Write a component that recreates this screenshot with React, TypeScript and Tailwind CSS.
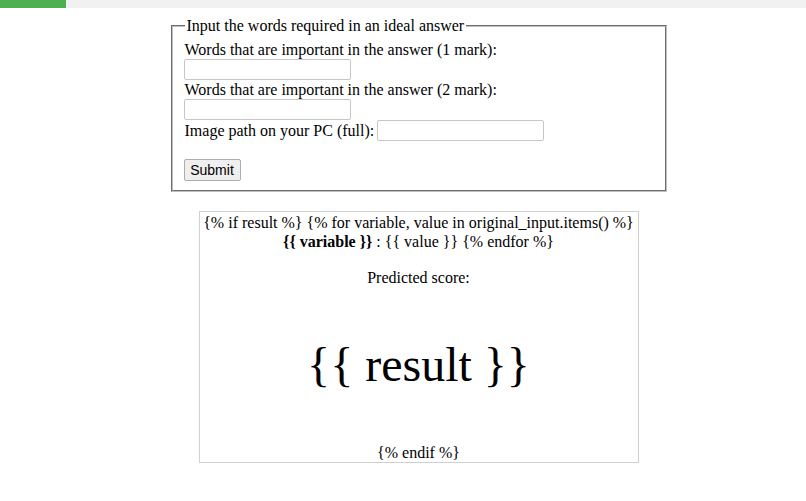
import React from "react";

const serif = "font-['Liberation_Serif','Times_New_Roman',serif]";

export default function App() {
  return (
    <div className={`min-h-[501px] w-full bg-white text-black ${serif} text-[16px]`}>
      <div className="h-2 w-full bg-[#f1f1f1]">
        <div className="h-2 w-[66px] bg-[#4caf50]" />
      </div>
      <div className="flex flex-col items-center pl-[31px]">
        <fieldset className="mt-[9px] w-[496px] border-2 [border-style:groove] border-[#c0c0c0] px-3 pt-[6px] pb-[9px]">
          <legend className="px-0.5 leading-[18px]">Input the words required in an ideal answer</legend>
          <div className="h-[18px] leading-[18px]">Words that are important in the answer (1 mark):</div>
          <div className="h-[21px]">
            <input type="text" className="block h-[21px] w-[167px] -ml-px border border-[#c6c6c6] rounded-[2px] px-0.5 font-['Liberation_Sans',Arial,sans-serif] text-[13.33px]" />
          </div>
          <div className="h-[19px] leading-[19px]">Words that are important in the answer (2 mark):</div>
          <div className="h-[21px]">
            <input type="text" className="block h-[21px] w-[167px] -ml-px border border-[#c6c6c6] rounded-[2px] px-0.5 font-['Liberation_Sans',Arial,sans-serif] text-[13.33px]" />
          </div>
          <div className="flex h-[21px] items-center">
            <span className="leading-[18px]">Image path on your PC (full):</span>
            <input type="text" className="ml-[3px] block h-[21px] w-[167px] border border-[#c6c6c6] rounded-[2px] px-0.5 font-['Liberation_Sans',Arial,sans-serif] text-[13.33px]" />
          </div>
          <div className="h-[18px]" />
          <button
            type="button"
            className="-ml-px block h-[22px] w-[57px] rounded-[2px] border border-[#adadad] bg-[#efefef] font-['Liberation_Sans',Arial,sans-serif] text-[14px] leading-[20px] text-black"
          >
            Submit
          </button>
        </fieldset>
        <div className="mt-[19px] w-[440px] border border-[#d0d0d0] text-center">
          <div className="pt-px leading-[19px]">
            {"{% if result %} {% for variable, value in original_input.items() %}"}
            <br />
            <b>{"{{ variable }}"}</b>
            {" : {{ value }} {% endfor %}"}
          </div>
          <div className="mt-[18px] leading-[18px]">Predicted score:</div>
          <div className="mt-[50px] text-[48px] leading-[55px]">{"{{ result }}"}</div>
          <div className="mt-[52px] leading-[18px]">{"{% endif %}"}</div>
        </div>
      </div>
    </div>
  );
}
